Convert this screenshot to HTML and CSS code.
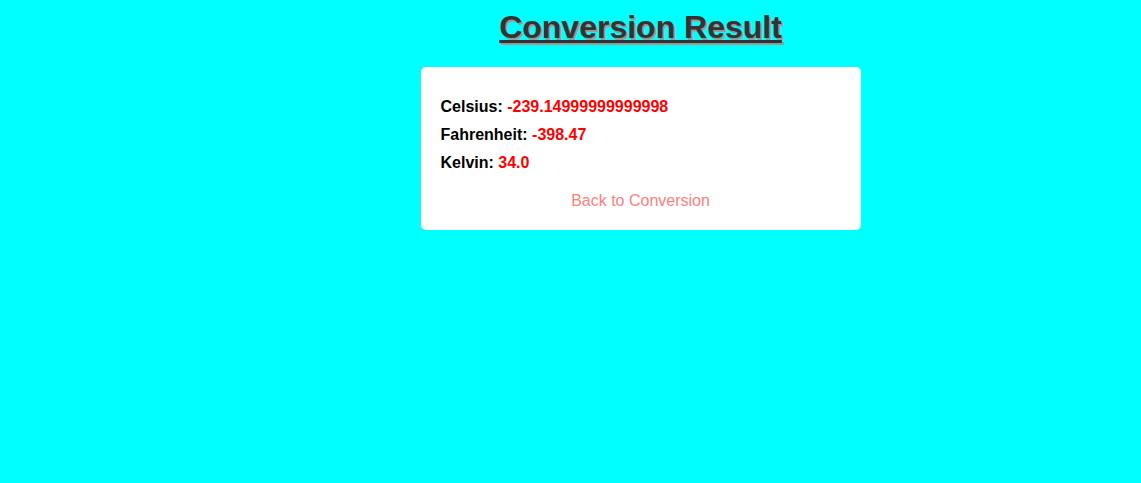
FILE: index.html
```html
<!DOCTYPE html>
<html>
<head>
<meta charset="utf-8">
<title>Conversion Result</title>
<link rel="stylesheet" href="styles.css">
</head>
<body>
<div class="page">
  <h1 class="title">Conversion Result</h1>
  <div class="card">
    <p class="row">Celsius: <span class="value">-239.14999999999998</span></p>
    <p class="row">Fahrenheit: <span class="value">-398.47</span></p>
    <p class="row">Kelvin: <span class="value">34.0</span></p>
    <a class="back" href="#">Back to Conversion</a>
  </div>
</div>
</body>
</html>
```
FILE: styles.css
```css
html, body {
  margin: 0;
  padding: 0;
}
body {
  background: #00ffff;
  font-family: "Liberation Sans", Arial, sans-serif;
}
.page {
  padding-left: 140px;
  display: flex;
  flex-direction: column;
  align-items: center;
}
.title {
  margin: 9px 0 21px;
  font-size: 32px;
  font-weight: bold;
  color: #333;
  text-decoration: underline;
  text-shadow: 2px 2px #999;
}
.card {
  width: 400px;
  background: #fff;
  border-radius: 5px;
  padding: 26px 20px 20px;
  display: flex;
  flex-direction: column;
}
.row {
  margin: 5px 0;
  font-size: 16px;
  font-weight: bold;
  color: #000;
}
.value {
  color: #ff0000;
}
.back {
  margin-top: 15px;
  align-self: center;
  color: #ff8080;
  text-decoration: none;
  font-size: 16px;
}
```
